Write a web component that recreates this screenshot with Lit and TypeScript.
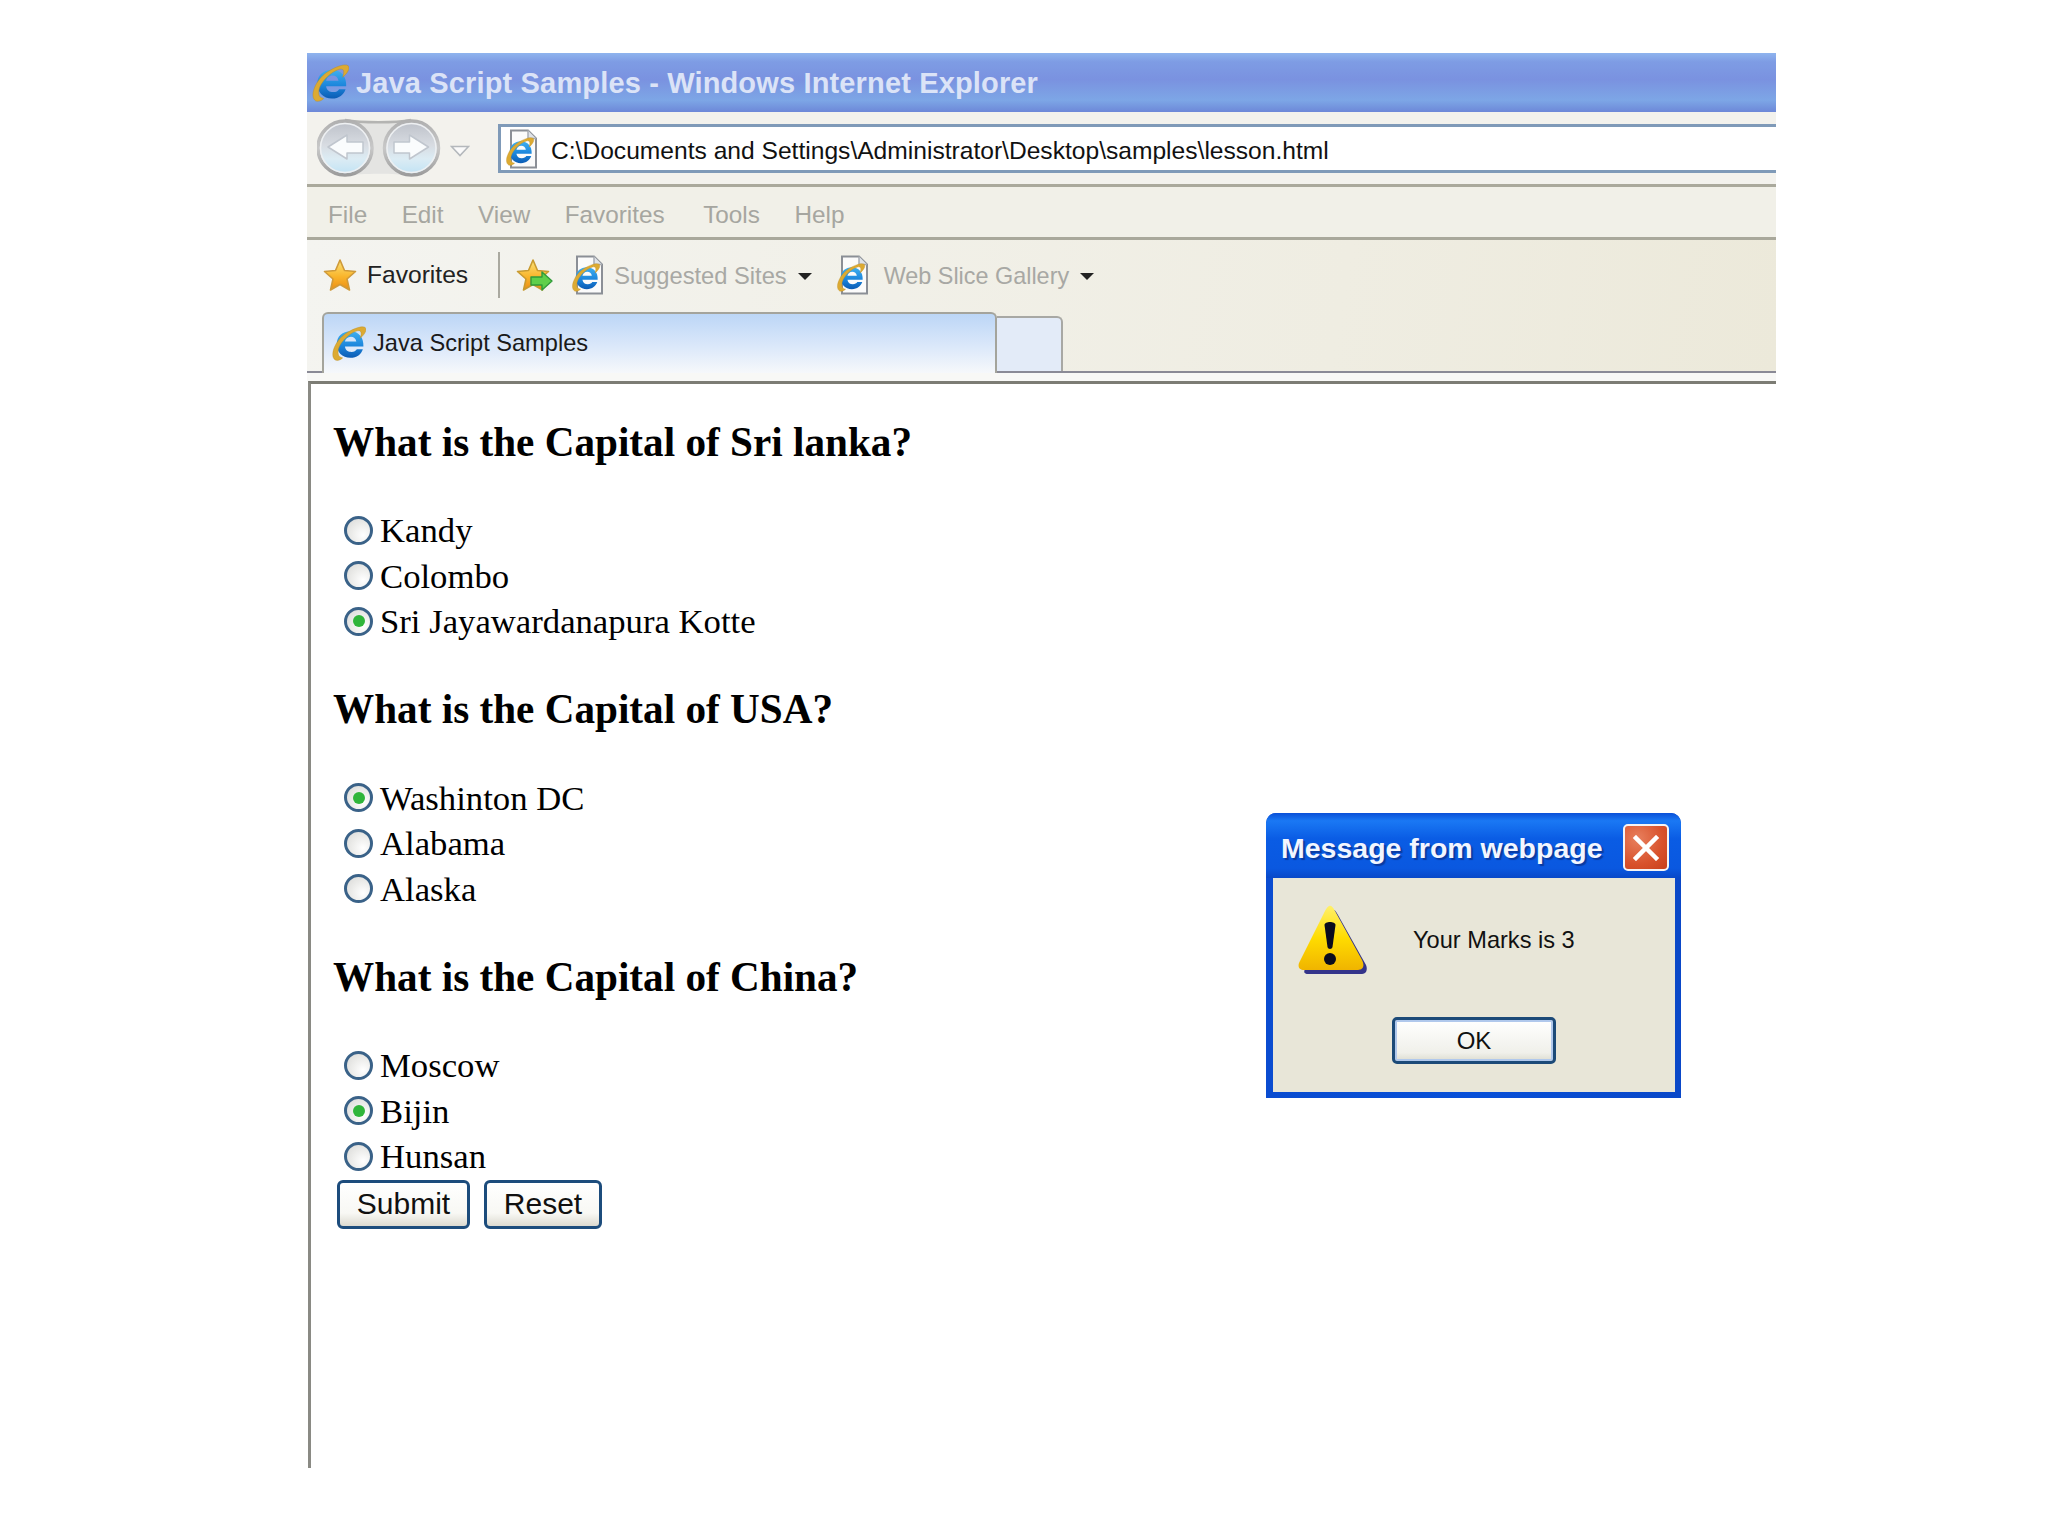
import { LitElement, html, css, svg } from "lit";
import { customElement } from "lit/decorators.js";

const iePaths = svg`
  <g transform="translate(-2.5 -2.5) scale(1.12)"><path fill="url(#ieb)" fill-rule="evenodd" d="M32 21H15C15.5 24.5 18 26 21 26C23.5 26 25 25 26 23.5H31.5C30 28 26 31.5 20 31.5C12.5 31.5 7.5 26 7.5 19C7.5 11.5 13 7 20 7C27.5 7 32.5 12.5 32 21ZM15 16.5H25.5C25 13.5 23 12 20.5 12C17.5 12 15.5 14 15 16.5Z"/></g>
  <path fill="#dcaa32" stroke="#b98a22" stroke-width=".4" d="M4.5 35C-2 31 4 15 15.5 7.5C24 2 32.5 -.5 35.2 1.6C37.5 3.8 34.5 9 30 12.5C32 7 31 4 27 5C18 7.5 5.5 20 7.5 29C8 31 9 32 12 32.8C10 35 6.5 36 4.5 35Z"/>`;

const ieDefs = svg`<defs><linearGradient id="ieb" x1="0" y1="0" x2="0" y2="1"><stop offset="0" stop-color="#3fb0f0"/><stop offset=".55" stop-color="#1c86dc"/><stop offset="1" stop-color="#0c5cb4"/></linearGradient></defs>`;

const ieIcon = (w: number) => html`<svg class="ico" width=${w} height=${w} viewBox="0 0 36 36">${ieDefs}${iePaths}</svg>`;

const pageIcon = () => html`<svg class="ico" width="34" height="40" viewBox="0 0 34 40">${ieDefs}
  <path d="M7 1.5H24L32 9.5V38.5H7Z" fill="#fbfbfb" stroke="#8b8f96" stroke-width="2"/>
  <path d="M24 1.5V9.5H32" fill="#dfe3e8" stroke="#a8acb2" stroke-width="1.5"/>
  <g transform="translate(1 8) scale(.8)">${iePaths}</g></svg>`;

const starPath = "M17 2L21.5 12.5L32.5 13.5L24 21L26.5 32L17 26.5L7.5 32L10 21L1.5 13.5L12.5 12.5Z";
const starDefs = svg`<defs><linearGradient id="st" x1="0" y1="0" x2="0" y2="1"><stop offset="0" stop-color="#fbe37a"/><stop offset=".55" stop-color="#f9b52c"/><stop offset="1" stop-color="#ec8d12"/></linearGradient></defs>`;
const star = () => html`<svg class="ico" width="34" height="34" viewBox="0 0 34 34">${starDefs}
  <path d=${starPath} fill="url(#st)" stroke="#cf9a3a" stroke-width="1.6" stroke-linejoin="round"/></svg>`;
const starAdd = () => html`<svg class="ico" width="37" height="34" viewBox="0 0 37 34">${starDefs}
  <path d=${starPath} fill="url(#st)" stroke="#c89a30" stroke-width="1.6" stroke-linejoin="round"/>
  <path d="M15 19H26V14L36 23L26 32V27H15Z" fill="#5fcf4a" stroke="#2f9a3a" stroke-width="1.4" stroke-linejoin="round"/></svg>`;

const navButtons = () => html`<svg class="ico" width="125" height="62" viewBox="0 0 125 62">
  <defs>
    <linearGradient id="nb" x1="0" y1="0" x2="0" y2="1"><stop offset="0" stop-color="#bcc0c8"/><stop offset=".45" stop-color="#d8dce2"/><stop offset=".7" stop-color="#dcecf4"/><stop offset="1" stop-color="#bfe2f4"/></linearGradient>
    <linearGradient id="nr" x1="0" y1="0" x2="0" y2="1"><stop offset="0" stop-color="#b0b0b0"/><stop offset=".5" stop-color="#c8c8c8"/><stop offset="1" stop-color="#9c9c9c"/></linearGradient>
  </defs>
  <path d="M28 3C45 6 78 6 94 3V59C78 56 45 56 28 59Z" fill="#e4e4e2"/>
  <path d="M28 3C45 6 78 6 94 3" fill="none" stroke="#b4b4b2" stroke-width="2.5"/>
  <circle cx="28" cy="31" r="27" fill="url(#nb)" stroke="url(#nr)" stroke-width="3.5"/>
  <circle cx="94.5" cy="31" r="27" fill="url(#nb)" stroke="url(#nr)" stroke-width="3.5"/>
  <circle cx="28" cy="31" r="24.5" fill="none" stroke="#eef0f2" stroke-width="1.5"/>
  <circle cx="94.5" cy="31" r="24.5" fill="none" stroke="#eef0f2" stroke-width="1.5"/>
  <path d="M11 30L30 18V25H46V36H30V42Z" fill="#fafcfd" stroke="#c0c6ce" stroke-width="1.5" stroke-linejoin="round"/>
  <path d="M111.5 30L92.5 18V25H77V36H92.5V42Z" fill="#fafcfd" stroke="#c0c6ce" stroke-width="1.5" stroke-linejoin="round"/>
</svg>`;

const warning = () => html`<svg class="ico" width="70" height="70" viewBox="0 0 70 70">
  <defs><linearGradient id="wg" x1="0" y1="0" x2="0" y2="1"><stop offset="0" stop-color="#fff06a"/><stop offset=".5" stop-color="#ffdc00"/><stop offset="1" stop-color="#f0b400"/></linearGradient></defs>
  <path d="M34 4C36 4 38 6 40 10L68 60C70 65 68 69 64 69H10C6 69 5 67 8 62Z" fill="#34348a"/>
  <path d="M31 1C33 0 35 2 37 6L64 55C67 61 65 65 60 65H6C1 65 -1 61 2 56L26 8C28 4 29 2 31 1Z" fill="url(#wg)"/>
  <path d="M26.5 20C26.5 16 37.5 16 37.5 20L34.5 42C34 44.5 30 44.5 29.5 42Z" fill="#0b0b1e"/>
  <circle cx="32" cy="54" r="6" fill="#0b0b1e"/>
</svg>`;

const closeIcon = () => html`<svg class="ico" width="26" height="26" viewBox="0 0 26 26">
  <path d="M3 3L23 23M23 3L3 23" stroke="#fff" stroke-width="4.5" stroke-linecap="square"/></svg>`;

const questions = [
  { q: "What is the Capital of Sri lanka?", opts: ["Kandy", "Colombo", "Sri Jayawardanapura Kotte"], sel: 2 },
  { q: "What is the Capital of USA?", opts: ["Washinton DC", "Alabama", "Alaska"], sel: 0 },
  { q: "What is the Capital of China?", opts: ["Moscow", "Bijin", "Hunsan"], sel: 1 },
];

@customElement("app-root")
export class AppRoot extends LitElement {
  static styles = css`
    :host { display: block; background: #fff; height: 1536px; padding: 53px 272px 0 307px; box-sizing: border-box; font-family: "Liberation Sans", Arial, sans-serif; }
    .window { position: relative; display: flex; flex-direction: column; height: 1415px; }
    .ico { display: block; flex: none; }

    .title { height: 59px; flex: none; display: flex; align-items: center; gap: 7px; padding-left: 4px; box-sizing: border-box;
      background: linear-gradient(180deg, #8fb4ee 0, #7e9ce4 15%, #7a92e0 45%, #7da6e6 80%, #6d88d8 100%); }
    .title-text { font-size: 29px; font-weight: 700; color: #dbe3f7; letter-spacing: .15px; white-space: nowrap; margin-top: 1px; }

    .nav { height: 75px; flex: none; box-sizing: border-box; display: flex; align-items: flex-start; background: #f3f2ed; border-bottom: 3px solid #aaa99c; }
    .nav-btns { margin: 5px 0 0 10px; }
    .drop { margin: 33px 0 0 8px; }
    .addr { flex: 1; margin: 12px 0 0 28px; height: 49px; box-sizing: border-box; display: flex; align-items: center; gap: 13px; padding-left: 3px; background: #fff; border: 3px solid #7f9ab8; border-right: 0; }
    .addr-text { font-size: 24.6px; color: #111; white-space: nowrap; margin-top: 5px; }

    .menu { height: 53px; flex: none; box-sizing: border-box; display: flex; align-items: center; gap: 34.5px; padding: 6px 0 0 21px; background: #f1f0e8; border-bottom: 3px solid #a9a89b; font-size: 24.3px; color: #a6a6a0; }
    .wide { padding-right: 4px; }

    .bars { display: flex; flex-direction: column; background: linear-gradient(100deg, #f4f4f0, #efede2 70%, #ece9da); border-bottom: 2px solid #8a8a96; height: 133px; box-sizing: border-box; flex: none; }
    .fav { height: 71px; flex: none; display: flex; align-items: center; padding: 0 0 1px 16px; box-sizing: border-box; font-size: 23.7px; color: #a8a8a4; }
    .fav-label { color: #222; margin-left: 10px; font-size: 24.6px; }
    .sep { width: 2px; height: 46px; background: #aaa9a0; margin: 0 16px 0 30px; }
    .fav-item { margin: 2px 0 0 10px; }
    .fav-item.web { margin-left: 15px; font-size: 23.4px; }
    .gap-a { margin-left: 17px; }
    .gap-b { margin-left: 23px; }
    .caret { width: 0; height: 0; border-left: 7px solid transparent; border-right: 7px solid transparent; border-top: 7px solid #222; margin: 2px 0 0 11px; }
    .tabs { display: flex; align-items: flex-end; padding-left: 15px; flex: 1; }
    .tab { width: 675px; height: 61px; margin-bottom: -2px; box-sizing: border-box; display: flex; align-items: center; gap: 7px; padding-left: 7px; border: 2px solid #a4a49c; border-bottom: 0; border-radius: 6px 6px 0 0; background: linear-gradient(180deg, #bcd6f6 0, #dbe8fa 55%, #f6f8fb 100%); font-size: 23.6px; color: #1a1a1a; position: relative; z-index: 1; }
    .tab-new { width: 66px; height: 55px; box-sizing: border-box; border: 2px solid #a8a8a4; border-bottom: 0; border-left: 0; border-radius: 0 6px 0 0; background: #e3ebf8; }
    .tab-gap { height: 8px; flex: none; background: #f8f8f6; }

    .content { flex: 1; background: #fff; margin-left: 1px; border-top: 3px solid #7c7c74; border-left: 3px solid #8a8a84; padding: 32.5px 0 0 22px; font-family: "Liberation Serif", "Times New Roman", serif; color: #000; }
    .groups { display: flex; flex-direction: column; gap: 39.6px; }
    .q { margin: 0 0 41.5px; font-size: 41.2px; line-height: 50px; font-weight: 700; }
    .row { display: flex; align-items: center; height: 45.5px; padding-left: 11px; font-size: 34.7px; line-height: 45.5px; gap: 7px; }
    .radio { width: 29px; height: 29px; flex: none; box-sizing: border-box; border: 3px solid #3a6288; border-radius: 50%; background: radial-gradient(circle at 70% 70%, #fff 0, #ececea 50%, #d8d8d6 100%); display: flex; align-items: center; justify-content: center; margin-top: -1px; }
    .radio.on::after { content: ""; width: 12px; height: 12px; border-radius: 50%; background: #2fb53a; }
    .btns { display: flex; gap: 14px; padding-left: 4px; }
    .btn { height: 49px; box-sizing: border-box; border: 3px solid #1c4c7c; border-radius: 6px; background: linear-gradient(180deg, #fff 0, #f8f8f4 70%, #dcdad0 100%); font: 30px "Liberation Sans", Arial, sans-serif; color: #111; display: flex; align-items: center; justify-content: center; padding: 0 0 1px; }
    .btn.s { width: 133px; }
    .btn.r { width: 118px; }

    .dialog { position: absolute; left: 959px; top: 760px; width: 415px; height: 285px; box-sizing: border-box; border-radius: 10px 10px 0 0; padding: 0 6px 6px 7px; display: flex; flex-direction: column; background: linear-gradient(90deg, #0a4cd0, #0850d8 50%, #0a48c8); }
    .dlg-bar { height: 65px; flex: none; box-sizing: border-box; margin: 0 -6px 0 -7px; padding: 4px 12px 0 15px; display: flex; align-items: center; justify-content: space-between; border-radius: 10px 10px 0 0; background: linear-gradient(180deg, #0a50d8 0, #1a78f4 12%, #0a5ce4 40%, #0a58e0 85%, #0848c8 100%); }
    .dlg-title { font-size: 28.5px; font-weight: 700; color: #f2f6ff; text-shadow: 2px 2px 1px #0a3aa0; white-space: nowrap; margin-top: 2px; }
    .close { width: 46px; height: 47px; box-sizing: border-box; border: 2px solid #f4f4f4; border-radius: 5px; background: radial-gradient(circle at 30% 30%, #e8805e, #d8522c 60%, #c8401c); display: flex; align-items: center; justify-content: center; }
    .dlg-body { flex: 1; background: #e8e6d8; padding: 27px 25px 0; display: flex; flex-direction: column; align-items: center; }
    .dlg-row { align-self: stretch; display: flex; align-items: center; gap: 45px; height: 70px; font-size: 23.6px; color: #111; }
    .ok { margin-top: 42px; width: 164px; height: 47px; box-sizing: border-box; border: 3px solid #1c4a78; border-radius: 5px; box-shadow: inset 0 0 0 2px #b0c8ec; background: linear-gradient(180deg, #fff, #f0f0ea 80%, #dcdcd0); display: flex; align-items: center; justify-content: center; font-size: 24px; color: #111; }
  `;

  render() {
    return html`
      <div class="window">
        <div class="title">${ieIcon(38)}<span class="title-text">Java Script Samples - Windows Internet Explorer</span></div>
        <div class="nav">
          <div class="nav-btns">${navButtons()}</div>
          <svg class="ico drop" width="20" height="12" viewBox="0 0 20 12"><path d="M1.5 1.5H18.5L10 10.5Z" fill="#fafafa" stroke="#b4b8bc" stroke-width="1.6"/></svg>
          <div class="addr">${pageIcon()}<span class="addr-text">C:\\Documents and Settings\\Administrator\\Desktop\\samples\\lesson.html</span></div>
        </div>
        <div class="menu"><span>File</span><span>Edit</span><span>View</span><span class="wide">Favorites</span><span>Tools</span><span>Help</span></div>
        <div class="bars">
          <div class="fav">
            ${star()}<span class="fav-label">Favorites</span>
            <div class="sep"></div>
            ${starAdd()}
            <span class="gap-a"></span>${pageIcon()}
            <span class="fav-item">Suggested Sites</span><span class="caret"></span>
            <span class="gap-b"></span>${pageIcon()}
            <span class="fav-item web">Web Slice Gallery</span><span class="caret"></span>
          </div>
          <div class="tabs">
            <div class="tab">${ieIcon(35)}<span>Java Script Samples</span></div>
            <div class="tab-new"></div>
          </div>
        </div>
        <div class="tab-gap"></div>
        <div class="content">
          <div class="groups">
            ${questions.map((g) => html`
              <div class="group">
                <h3 class="q">${g.q}</h3>
                ${g.opts.map((o, i) => html`<div class="row"><span class="radio ${i === g.sel ? "on" : ""}"></span><span>${o}</span></div>`)}
              </div>`)}
          </div>
          <div class="btns"><div class="btn s">Submit</div><div class="btn r">Reset</div></div>
        </div>
        <div class="dialog">
          <div class="dlg-bar"><span class="dlg-title">Message from webpage</span><div class="close">${closeIcon()}</div></div>
          <div class="dlg-body">
            <div class="dlg-row">${warning()}<span>Your Marks is 3</span></div>
            <div class="ok">OK</div>
          </div>
        </div>
      </div>`;
  }
}
